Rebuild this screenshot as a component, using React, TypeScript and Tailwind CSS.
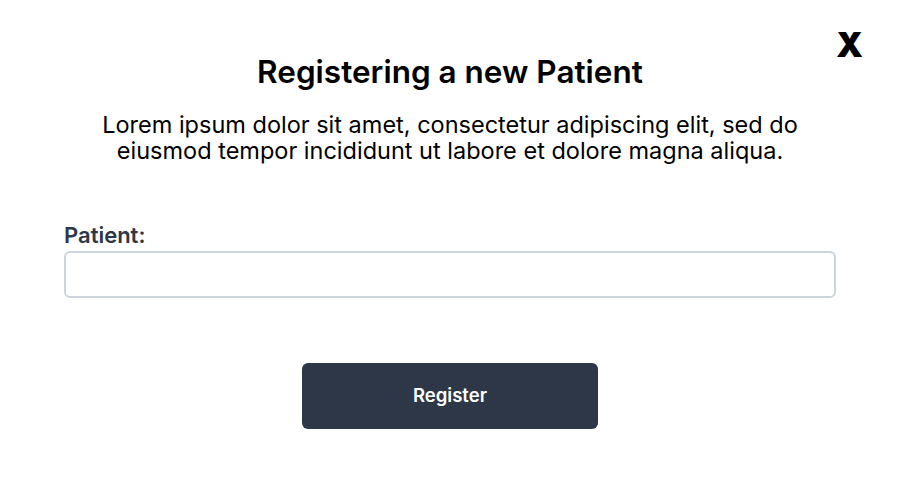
export default function App() {
  return (
    <div className="relative w-[900px] h-[493px] bg-white font-['Inter',sans-serif] text-black">
      <button className="absolute right-[37px] top-[28px] text-[34px] font-black leading-none text-black">
        X
      </button>
      <div className="flex flex-col px-16 pt-[52px]">
        <h1 className="text-center text-[31.5px] font-semibold leading-[40px]">Registering a new Patient</h1>
        <div className="mt-[20px] flex flex-col items-center text-[23.5px] leading-[26px]">
          <p>Lorem ipsum dolor sit amet, consectetur adipiscing elit, sed do</p>
          <p>eiusmod tempor incididunt ut labore et dolore magna aliqua.</p>
        </div>
        <label className="mt-[56px] text-[22px] font-semibold leading-[30px] text-[#2d3748]">Patient:</label>
        <input
          type="text"
          className="mt-[1px] h-[47px] w-full rounded-md border-2 border-[#cbd5e0] px-3 outline-none"
        />
        <div className="mt-[65px] flex justify-center">
          <button className="h-[66px] w-[296px] rounded-md bg-[#2d3748] text-[18.5px] font-semibold text-white">
            Register
          </button>
        </div>
      </div>
    </div>
  );
}
